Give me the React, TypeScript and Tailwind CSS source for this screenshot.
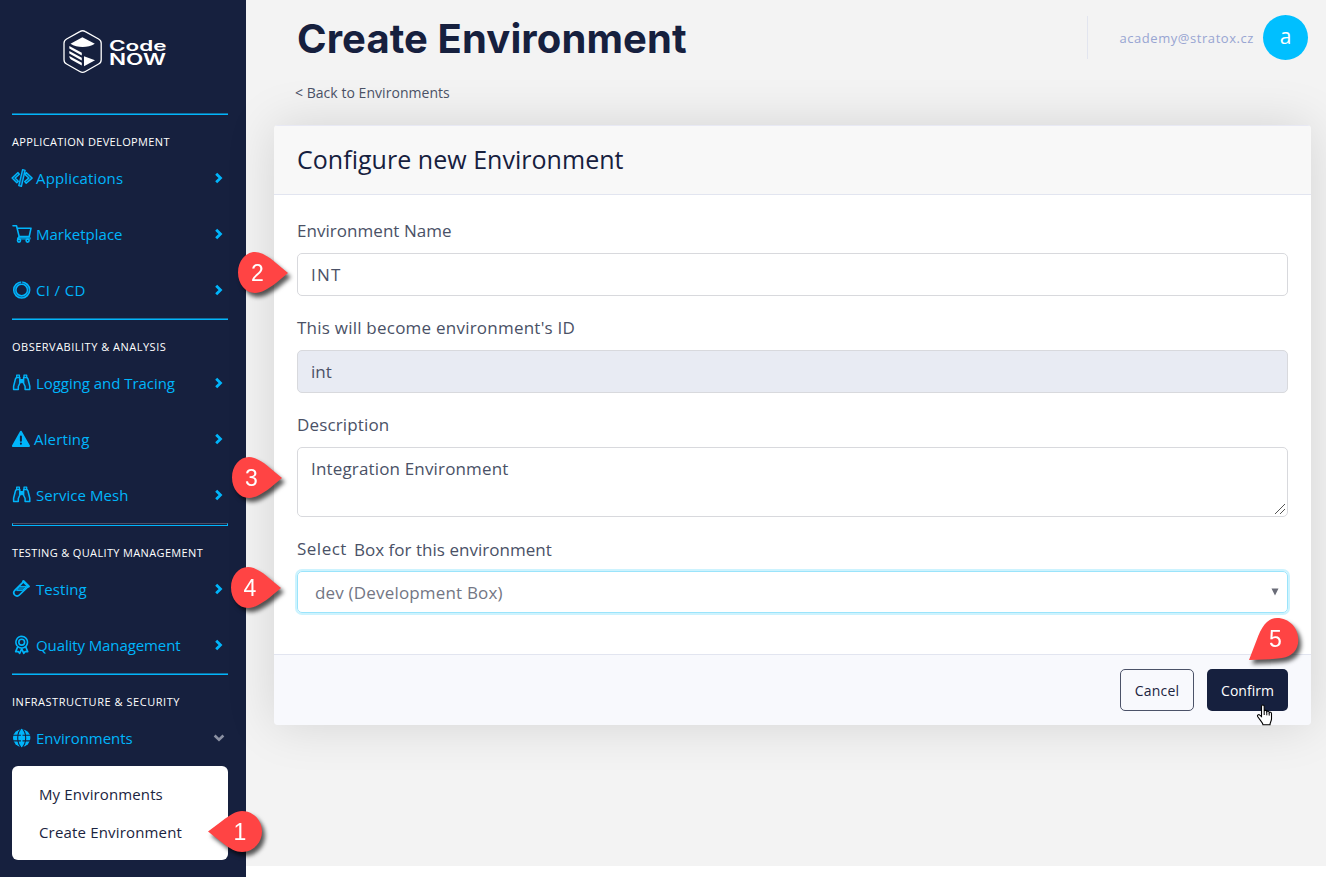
import type { ReactNode } from "react";

function Svg({ children, w = 20, h = 20, className = "" }: { children: ReactNode; w?: number; h?: number; className?: string }) {
  return (
    <svg
      width={w}
      height={h}
      viewBox={`0 0 ${w} ${h}`}
      fill="none"
      stroke="currentColor"
      strokeWidth="1.6"
      strokeLinecap="round"
      strokeLinejoin="round"
      className={`shrink-0 ${className}`}
    >
      {children}
    </svg>
  );
}

const CodeIcon = () => (
  <Svg w={22} className="-ml-px">
    <g fill="currentColor" fillOpacity=".3" strokeWidth="1.4">
      <path d="M7 4.6 1.100 10.100 5.800 14.800 7.300 13.200 4.200 10.100 8.300 6.300z" />
      <path d="M15.200 4.600 21.100 10.100 15.200 15.200 13.700 13.500 17.800 10.100 14 6.500z" />
    </g>
    <path d="M11.600 1.700l2.500.7-3.700 15.900-2.600-.7z" fill="#16457a" strokeWidth="1.400" />
  </Svg>
);

const CartIcon = () => (
  <Svg>
    <path d="M1 1.700h3.500l2.700 10.900h10L19 4.200H5.200" />
    <path d="M7.200 12.600 5.700 15.200" />
    <path d="M6.600 14.200h10.800" strokeWidth="3" strokeOpacity=".65" />
    <circle cx="7" cy="16.600" r="1.500" />
    <circle cx="15.600" cy="16.600" r="1.500" />
  </Svg>
);

const RingIcon = () => (
  <Svg>
    <circle cx="9.700" cy="10" r="6.900" strokeWidth="3.700" />
    <circle cx="9.700" cy="10" r="6.900" stroke="#10609c" strokeWidth=".9" />
    <path d="M9.700 1v2.200" stroke="#16203e" strokeWidth=".9" />
  </Svg>
);

const BinocularsIcon = () => (
  <Svg>
    <g strokeWidth="1.500" fill="currentColor" fillOpacity=".1">
      <path d="M4.500 4.600 3.500 5.800 1.600 13.300v3.200h4.700v-3l1.500-3.200V4.600z" />
      <path d="M14.900 4.600l1 1.200 1.900 7.500v3.200h-4.700v-3l-1.500-3.200V4.600z" />
    </g>
    <path d="M4.700 4.500V2.100h2.700v2.400M12 4.500V2.100h2.700v2.400" strokeWidth="1.300" />
    <path d="M8 6.500h3.400v3.200H8z" fill="currentColor" strokeWidth="1" />
  </Svg>
);

const AlertIcon = () => (
  <Svg w={19} className="-ml-px">
    <path d="M9.900 2.700 18 17H1.900z" fill="currentColor" strokeWidth="2" />
    <path d="M9.900 7.600v4.200M9.900 14.600v.2" stroke="#16203e" strokeWidth="2" />
  </Svg>
);

const TubeIcon = () => (
  <Svg>
    <path d="M10.600 3.600 2.800 11.400a3.300 3.300 0 0 0 0 4.600 3.300 3.300 0 0 0 4.600 0L15.800 7.900" strokeWidth="1.700" />
    <path d="M11.300 2.300l5.300 5.100" strokeWidth="2.600" />
    <path d="M7.700 7.400h7L10.400 11.600H5z" fill="currentColor" fillOpacity=".6" strokeWidth="1" />
  </Svg>
);

const AwardIcon = () => (
  <Svg>
    <circle cx="9.700" cy="7.200" r="5.800" strokeWidth="1.600" strokeDasharray="3.200 .45" />
    <circle cx="9.700" cy="7.200" r="2.900" strokeWidth="1.600" />
    <path d="M5.600 12 3.700 16.600l2.500-.1 1.400 1.800 2.100-4.500 2.100 4.500 1.400-1.800 2.500.1L13.800 12" strokeWidth="1.700" />
  </Svg>
);

const GlobeIcon = () => (
  <Svg>
    <circle cx="9.700" cy="10" r="8.700" fill="currentColor" stroke="none" />
    <g stroke="#16203e" strokeWidth="1.100">
      <path d="M1 7.200h17.500M1 12.900h17.500" />
      <ellipse cx="9.700" cy="10" rx="4" ry="8.700" />
    </g>
    <path d="M9.700 1.500v17" strokeWidth="1.600" />
  </Svg>
);

const Chevron = ({ open = false }: { open?: boolean }) =>
  open ? (
    <Svg w={12} h={10} className="text-[#8b91a3]">
      <path d="M1.600 2.500 6 6.700l4.400-4.200" strokeWidth="2.600" strokeLinecap="butt" strokeLinejoin="miter" />
    </Svg>
  ) : (
    <Svg w={12} h={12}>
      <path d="M3.200 1.700 7.500 6l-4.300 4.300" strokeWidth="2.800" strokeLinecap="butt" strokeLinejoin="miter" />
    </Svg>
  );

function NavItem({ icon, label, track = "", open = false, gap = "gap-1" }: { icon: ReactNode; label: string; track?: string; open?: boolean; gap?: string }) {
  return (
    <a className={`flex h-14 items-center pb-0.5 pr-0.5 ${gap} text-[15px] leading-6 text-[#00b5fb]`}>
      {icon}
      <span className={`whitespace-nowrap ${track}`}>{label}</span>
      <span className="ml-auto flex w-[15px] justify-center">
        <Chevron open={open} />
      </span>
    </a>
  );
}

function Section({ title, track, first = false, tall = false, children }: { title: string; track: string; first?: boolean; tall?: boolean; children: ReactNode }) {
  return (
    <section className={first ? "" : "-mt-px"}>
      {tall ? (
        <div className="h-[3px] border-x border-b border-t border-x-[#00b5fb] border-b-[#00b5fb] border-t-[#4a4f66]" />
      ) : (
        <div className="h-0.5 border-b border-t border-b-[#00b5fb] border-t-[#136f9e]" />
      )}
      <h2 className={`mt-[18px] whitespace-nowrap text-[11px] leading-[18px] text-white ${track}`}>{title}</h2>
      {children}
    </section>
  );
}

function Logo() {
  return (
    <svg width="104" height="44" viewBox="0 0 104 44" className="ml-[51px] text-white">
      <path
        d="M16.8 1.6a5.5 5.5 0 0 1 5.6 0L35.6 9a5 5 0 0 1 2.6 4.5v16a5 5 0 0 1-2.6 4.5l-13.2 7.5a5.5 5.5 0 0 1-5.6 0L3.6 34A5 5 0 0 1 1 29.500V13.500A5 5 0 0 1 3.600 9z"
        fill="none"
        stroke="currentColor"
        strokeWidth="1.3"
      />
      <path d="M7.500 13.800 19.400 7.300l12.400 6.500c-7 4.300-17.500 4.300-24.300 0z" fill="currentColor" />
      <path d="M6.300 16 18.800 22.800v2.800L6.300 18.500zM6.300 21l12.500 6.700v2.800L6.300 23.500zM6.300 26l12.500 6.700v2.800L8 29.500c-1-.7-1.700-2-1.700-3.500z" fill="currentColor" />
      <path d="M21 26.200 32 30.300 21 36.300z" fill="currentColor" />
      <g fill="currentColor" fontFamily="Inter, sans-serif" fontWeight="600">
        <text x="46" y="20.700" fontSize="14" textLength="57.500" lengthAdjust="spacingAndGlyphs">Code</text>
        <text x="46" y="35" fontSize="15.500" textLength="57" lengthAdjust="spacingAndGlyphs">NOW</text>
      </g>
    </svg>
  );
}

const SIDE_PIN = "M50 21 38 11C30 4 23 0 17 0 7.500 0 0 9 0 20.500S7.500 41 17 41c6 0 13-4 21-10z";
const WIDE_PIN = "M54 20.500 40 10C32 4 26 0 20 0 9 0 0 9 0 20.500S9 41 20 41c6 0 12-3 20-9.500z";
const CORNER_PIN = "M0 42 7.700 22C12.500 9 18 0 28 0c12 0 21.300 9.500 21.300 22 0 10-6.300 16.500-16.300 18C26 41.300 14 41.500 0 42z";

function Pin({ n, d, place, x, flip = false }: { n: number; d: string; place: string; x: number; flip?: boolean }) {
  return (
    <svg width="54" height="42" viewBox="0 0 54 42" className={`absolute z-10 overflow-visible drop-shadow-[3px_4px_2px_rgba(0,0,0,0.65)] ${place}`}>
      <path d={d} fill="#ff4444" transform={flip ? "translate(54 0) scale(-1 1)" : undefined} />
      <text x={x} y="28.500" textAnchor="middle" fontSize="23" fill="#fff" fontFamily="'Liberation Sans', Arial, sans-serif">
        {n}
      </text>
    </svg>
  );
}

function Field({ label, track = "", children }: { label: ReactNode; track?: string; children: ReactNode }) {
  return (
    <div className="flex flex-col">
      <label className={`mb-2.5 h-6 text-[17px] leading-6 text-[#4a5166] ${track}`}>{label}</label>
      {children}
    </div>
  );
}

export default function App() {
  return (
    <div className="relative flex h-[877px] w-[1326px] overflow-hidden bg-white font-['Open_Sans',sans-serif]">
      <aside className="flex w-[246px] shrink-0 flex-col bg-[#16203e] pl-3 pr-[18px]">
        <div className="flex h-[113px] shrink-0 items-start pt-[30px]">
          <Logo />
        </div>
        <Section first title="APPLICATION DEVELOPMENT" track="tracking-[0.35px]">
          <NavItem icon={<CodeIcon />} label="Applications" track="tracking-[0.15px]" gap="gap-[3px]" />
          <NavItem icon={<CartIcon />} label="Marketplace" />
          <NavItem icon={<RingIcon />} label="CI / CD" track="tracking-[0.35px]" />
        </Section>
        <Section title="OBSERVABILITY & ANALYSIS" track="tracking-[0.5px]">
          <NavItem icon={<BinocularsIcon />} label="Logging and Tracing" track="tracking-[-0.05px]" />
          <NavItem icon={<AlertIcon />} label="Alerting" track="tracking-[0.15px]" />
          <NavItem icon={<BinocularsIcon />} label="Service Mesh" track="tracking-[0.06px]" />
        </Section>
        <Section tall title="TESTING & QUALITY MANAGEMENT" track="tracking-[0.35px]">
          <NavItem icon={<TubeIcon />} label="Testing" track="tracking-[0.05px]" />
          <NavItem icon={<AwardIcon />} label="Quality Management" track="tracking-[-0.1px]" />
        </Section>
        <Section title="INFRASTRUCTURE & SECURITY" track="tracking-[0.54px]">
          <NavItem open icon={<GlobeIcon />} label="Environments" track="tracking-[-0.05px]" />
        </Section>
        <div className="-mt-px h-[94px] shrink-0 rounded-md bg-white pl-[27px] pt-[9px] text-[15px] leading-[38px] text-[#1b2440]">
          <div className="tracking-[0.12px]">My Environments</div>
          <div className="tracking-[0.17px]">Create Environment</div>
        </div>
      </aside>

      <main className="h-[866px] flex-1 bg-[#f3f3f3] pl-7 pr-[15px]">
        <header className="flex h-[76px] items-start pr-[3px]">
          <h1 className="pl-[23px] pt-[14px] font-['Inter',sans-serif] text-[40px] font-bold leading-[50px] tracking-[0.1px] text-[#16203e]">Create Environment</h1>
          <div className="ml-auto mt-[15px] flex items-center">
            <div className="h-[43px] w-px bg-[#e2e5ef]" />
            <span className="ml-[31px] text-[13px] leading-5 tracking-[0.56px] text-[#98a5d2]">academy@stratox.cz</span>
            <div className="ml-[9px] flex size-[45px] items-center justify-center rounded-full bg-[#00bfff] pb-[3px] text-[21px] leading-none text-white">a</div>
          </div>
        </header>
        <a className="ml-[21px] mt-[7px] block text-[14px] leading-5 tracking-[0.04px] text-[#4a5166]">&lt; Back to Environments</a>

        <div className="mt-[22px] flex h-[600px] flex-col overflow-hidden rounded-[4px] shadow-[0_0_50px_rgba(0,0,0,0.13)]">
          <div className="flex h-[70px] shrink-0 items-center border-y border-b-[#e2e5f0] border-t-[#e8e9f4] bg-[#f8f8f8] pb-0.5 pl-[23px] text-[25px] leading-8 tracking-[0.03px] text-[#16203e]">
            Configure new Environment
          </div>
          <div className="flex flex-1 flex-col gap-5 bg-white px-[23px] pt-6">
            <Field label="Environment Name" track="tracking-[0.04px]">
              <div className="flex h-[43px] items-center rounded-[5px] border border-[#d8d9dd] px-[13px] text-[17px] tracking-[1.2px] text-[#4a5166]">INT</div>
            </Field>
            <Field label="This will become environment's ID" track="tracking-[0.23px]">
              <div className="flex h-[43px] items-center rounded-[5px] border border-[#d8d9dd] bg-[#e8ebf3] px-[13px] text-[17px] tracking-normal text-[#4a5166]">int</div>
            </Field>
            <Field label="Description" track="tracking-[0.14px]">
              <div className="relative h-[70px] rounded-[5px] border border-[#d8d9dd] px-[13px] pt-[9px] text-[17px] leading-6 tracking-[0.16px] text-[#4a5166]">
                Integration Environment
                <svg width="12" height="12" viewBox="0 0 12 12" className="absolute bottom-px right-px" stroke="#555" strokeWidth="1">
                  <path d="M1 11 11 1M6 11l5-5" />
                </svg>
              </div>
            </Field>
            <Field
              label={
                <span className="flex gap-[7px]">
                  <span className="tracking-[0.5px]">Select</span>
                  <span className="relative top-px tracking-[0.03px]">Box for this environment</span>
                </span>
              }
            >
              <div className="flex h-[42px] items-center justify-between rounded-[5px] border border-[#9be4fb] pl-[17px] pr-2 text-[17px] tracking-[0.18px] text-[#737684] shadow-[0_0_0_2px_#cdf3fe]">
                <span className="pt-0.5">dev (Development Box)</span>
                <svg width="8" height="8" viewBox="0 0 8 8" fill="#6a6c78">
                  <path d="M.500.500h7L4 7.500z" />
                </svg>
              </div>
            </Field>
          </div>
          <div className="flex h-[71px] shrink-0 items-center justify-end gap-[13px] border-t border-[#e2e5f0] bg-[#f8f9fd] pr-[23px] text-[14px]">
            <button className="h-[42px] w-[74px] rounded-[5px] border border-[#4b5268] tracking-[0.2px] text-[#1b2440]">Cancel</button>
            <button className="h-[42px] w-[81px] rounded-[5px] bg-[#16203e] text-white">Confirm</button>
          </div>
        </div>
      </main>

      <Pin n={2} d={SIDE_PIN} place="left-[238px] top-[252px]" x={19.5} />
      <Pin n={3} d={SIDE_PIN} place="left-[232px] top-[457px]" x={19.5} />
      <Pin n={4} d={SIDE_PIN} place="left-[231px] top-[567px]" x={19} />
      <Pin n={1} d={WIDE_PIN} place="left-[208px] top-[811px]" x={32} flip />
      <Pin n={5} d={CORNER_PIN} place="left-[1249px] top-[618px]" x={26.5} />

      <svg width="17" height="22" viewBox="0 0 17 22" className="absolute left-[1256px] top-[704px] z-20">
        <path
          d="M5.500 12.500V2.500c0-2 2.700-2 2.700 0V7c.4-1 2.500-.8 2.600.6.600-.8 2.300-.5 2.400.9.700-.6 2.300-.2 2.300 1.200v5c0 2.500-1.500 3.500-1.500 6H7c0-2-3-4.500-5.200-8-1-1.700.9-2.700 2-1.600z"
          fill="#fff"
          stroke="#000"
          strokeWidth="1.100"
        />
        <path d="M8.200 7v4M10.800 8v3.300M13.200 9v2.600" stroke="#000" strokeWidth="1" />
      </svg>
    </div>
  );
}
